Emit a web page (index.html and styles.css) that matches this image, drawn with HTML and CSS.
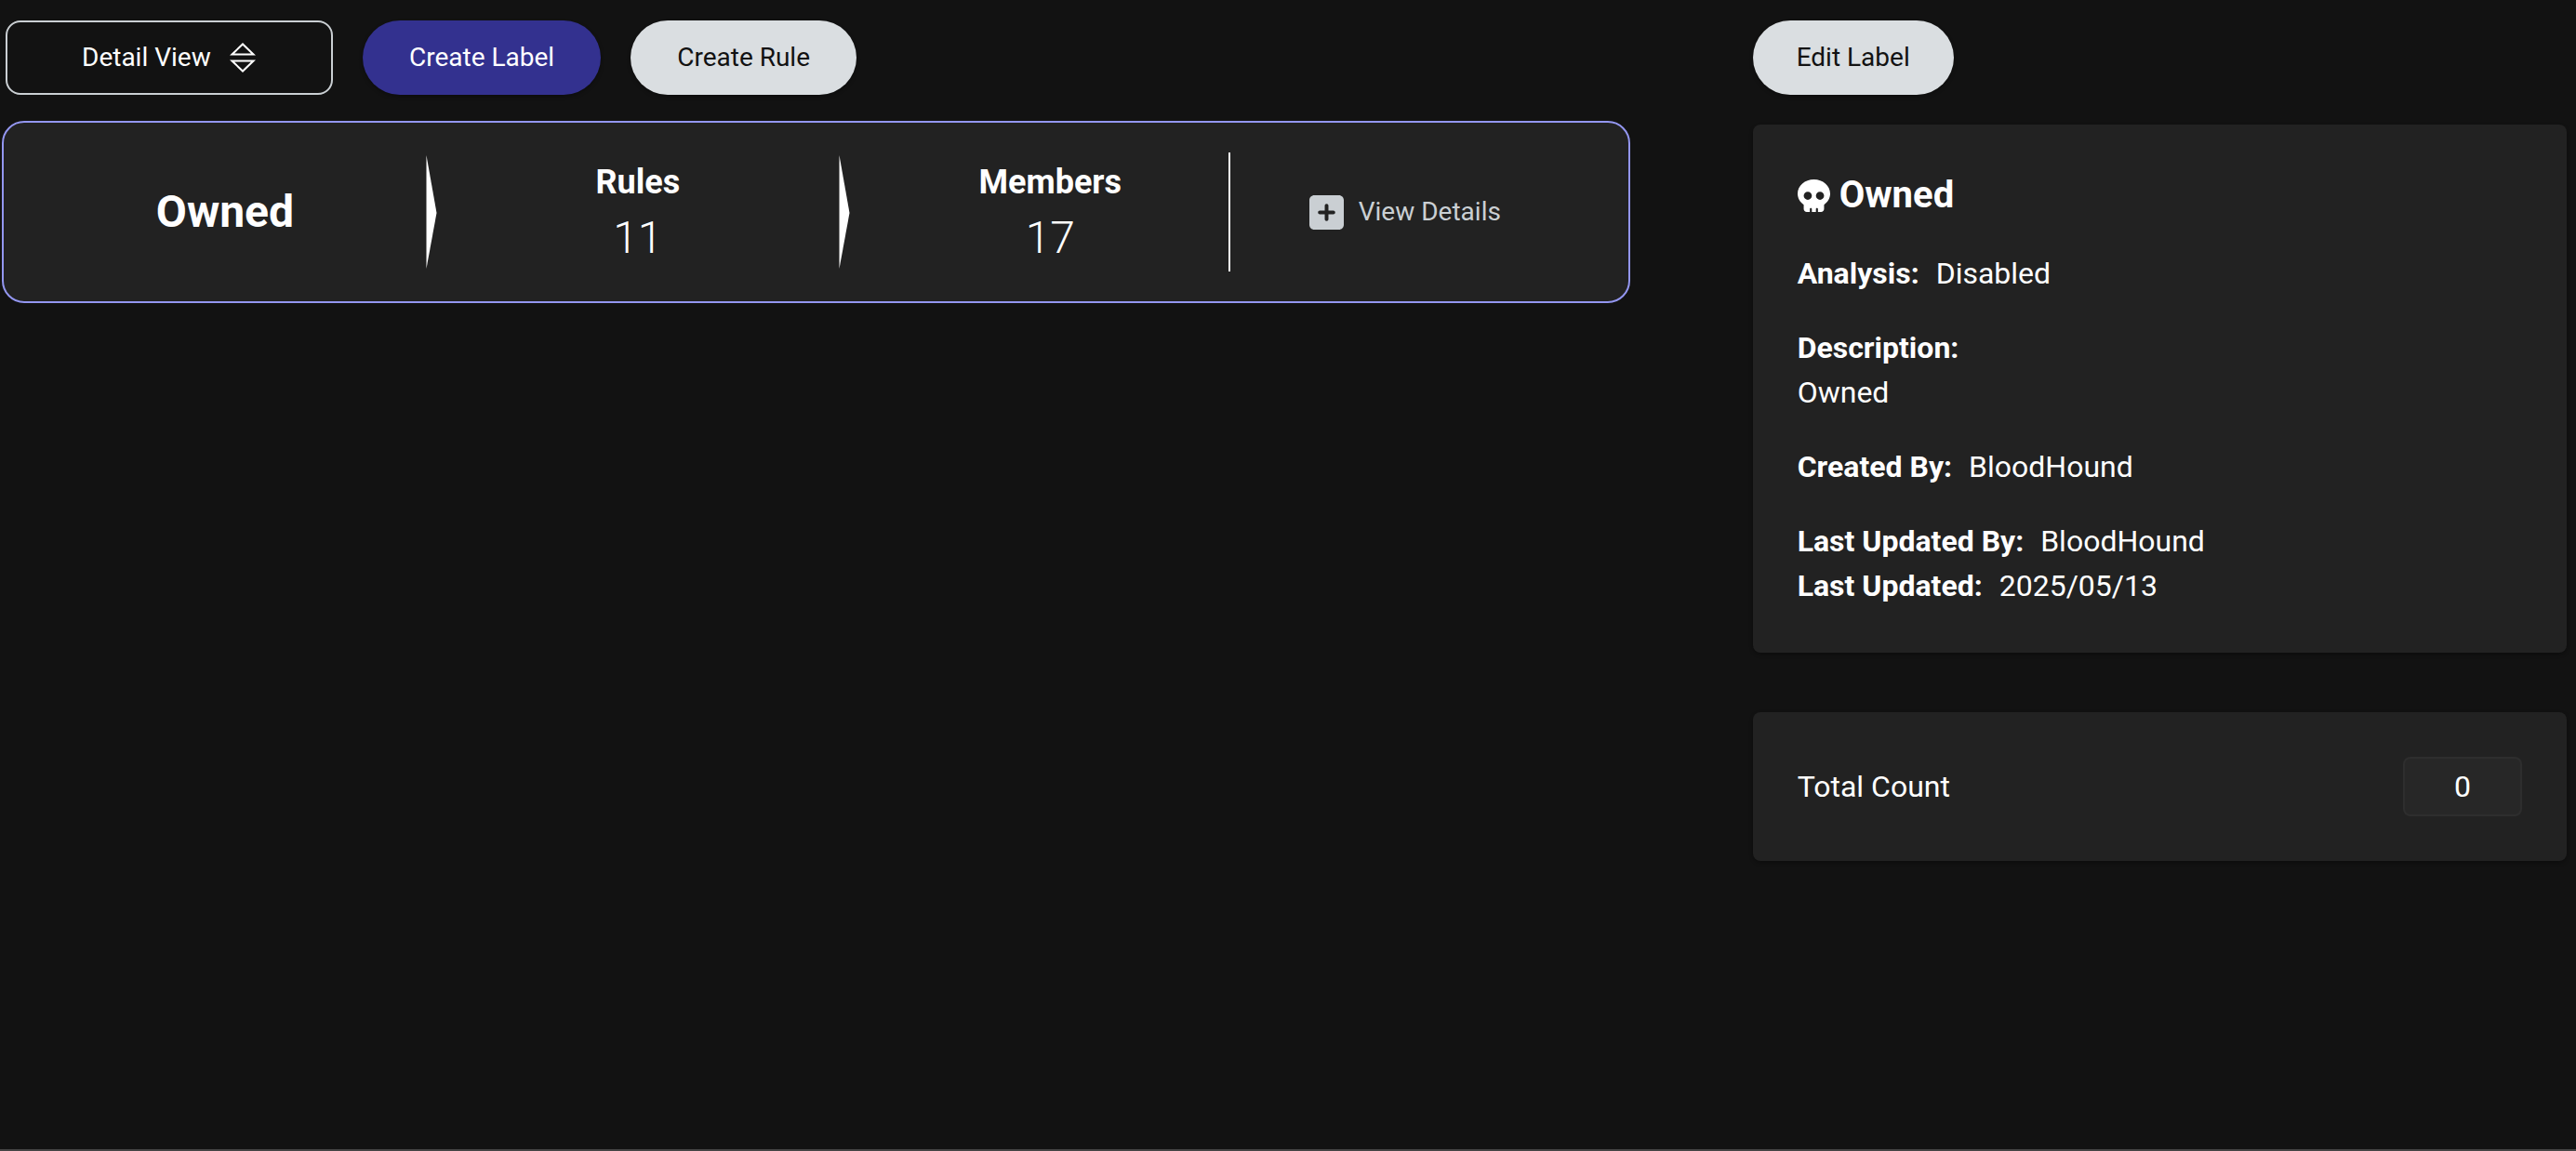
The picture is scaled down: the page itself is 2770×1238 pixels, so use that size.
FILE: index.html
```html
<!DOCTYPE html>
<html lang="en">
<head>
<meta charset="utf-8">
<meta name="viewport" content="width=device-width, initial-scale=1">
<title>Owned</title>
<link rel="stylesheet" href="styles.css">
</head>
<body>
<main class="page">
  <section class="primary">
    <div class="toolbar">
      <div class="view-select">
        <select class="view-select-input" aria-label="View">
          <option>Detail View</option>
        </select>
        <svg class="view-select-icon" viewBox="0 0 28 34" fill="none" stroke="currentColor" stroke-width="2" aria-hidden="true">
          <path d="M2.500 13.500L14 2.500L25.500 13.500Z"/>
          <path d="M2.500 20.500L14 31.500L25.500 20.500Z"/>
        </svg>
      </div>
      <button class="button button-wide button-primary" type="button">Create Label</button>
      <button class="button button-wide" type="button">Create Rule</button>
    </div>
    <article class="summary">
      <h1 class="summary-name">Owned</h1>
      <svg class="arrow" viewBox="0 0 12 122" fill="currentColor" aria-hidden="true"><path d="M0.500 0L11.500 62L0.500 122Z"/></svg>
      <div class="stat">
        <h2 class="stat-label">Rules</h2>
        <p class="stat-value">11</p>
      </div>
      <svg class="arrow" viewBox="0 0 12 122" fill="currentColor" aria-hidden="true"><path d="M0.500 0L11.500 62L0.500 122Z"/></svg>
      <div class="stat stat-last">
        <h2 class="stat-label">Members</h2>
        <p class="stat-value">17</p>
      </div>
      <div class="divider"></div>
      <button class="details-button" type="button">
        <svg class="plus-icon" viewBox="0 32 448 448" fill="currentColor" aria-hidden="true"><path d="M64 32C28.700 32 0 60.700 0 96V416c0 35.300 28.700 64 64 64H384c35.300 0 64-28.700 64-64V96c0-35.300-28.700-64-64-64H64zM200 344V280H136c-13.300 0-24-10.700-24-24s10.700-24 24-24h64V168c0-13.300 10.700-24 24-24s24 10.700 24 24v64h64c13.300 0 24 10.700 24 24s-10.700 24-24 24H248v64c0 13.300-10.700 24-24 24s-24-10.700-24-24z"/></svg>
        View Details
      </button>
    </article>
  </section>

  <aside class="sidebar">
    <div class="sidebar-toolbar">
      <button class="button" type="button">Edit Label</button>
    </div>
    <section class="panel info">
      <h2 class="info-title">
        <svg class="skull-icon" viewBox="0 0 512 512" fill="currentColor" aria-hidden="true"><path d="M416 398.900c58.500-41.100 96-104.100 96-174.900C512 100.300 397.400 0 256 0S0 100.300 0 224c0 70.700 37.500 133.800 96 174.900c0 .4 0 .7 0 1.100v64c0 26.500 21.500 48 48 48h48V464c0-8.800 7.200-16 16-16s16 7.200 16 16v48h64V464c0-8.800 7.200-16 16-16s16 7.200 16 16v48h48c26.500 0 48-21.500 48-48V400c0-.4 0-.7 0-1.100zM96 256a64 64 0 1 1 128 0A64 64 0 1 1 96 256zm256-64a64 64 0 1 1 0 128 64 64 0 1 1 0-128z"/></svg>
        Owned
      </h2>
      <dl class="field"><div class="field-row"><dt>Analysis:</dt><dd>Disabled</dd></div></dl>
      <dl class="field"><div><dt>Description:</dt><dd>Owned</dd></div></dl>
      <dl class="field"><div class="field-row"><dt>Created By:</dt><dd>BloodHound</dd></div></dl>
      <dl class="field">
        <div class="field-row"><dt>Last Updated By:</dt><dd>BloodHound</dd></div>
        <div class="field-row"><dt>Last Updated:</dt><dd>2025/05/13</dd></div>
      </dl>
    </section>
    <section class="panel count">
      <span>Total Count</span>
      <span class="count-value">0</span>
    </section>
  </aside>
</main>
</body>
</html>
```
FILE: styles.css
```css
*,
*::before,
*::after {
  box-sizing: border-box;
}

body,
h1,
h2,
p,
dl,
dd {
  margin: 0;
}

body {
  background: #121212;
  color: #fff;
  font-family: Roboto, "Liberation Sans", sans-serif;
  font-size: 32px;
  line-height: 48px;
}

button,
select {
  font: inherit;
  cursor: pointer;
}

.page {
  display: grid;
  grid-template-columns: 2fr 1fr;
  align-items: start;
  gap: 132px;
  min-height: 100vh;
  padding: 22px 10px 22px 2px;
  border-bottom: 2px solid #444;
}

.primary {
  display: grid;
  gap: 28px;
}

.toolbar {
  display: flex;
  gap: 32px;
  padding-left: 4px;
}

.view-select {
  position: relative;
  width: 352px;
}

.view-select-input {
  appearance: none;
  width: 100%;
  height: 80px;
  padding: 0 80px;
  border: 2px solid #cacfd3;
  border-radius: 16px;
  background: transparent;
  color: #fff;
  font-size: 28px;
  line-height: 40px;
}

.view-select-icon {
  position: absolute;
  top: 23px;
  right: 83px;
  width: 28px;
  height: 34px;
  pointer-events: none;
}

.button {
  height: 80px;
  padding: 0 47px;
  border: 0;
  border-radius: 40px;
  background: #dadee1;
  color: #121212;
  font-size: 28px;
  line-height: 40px;
  box-shadow: 0 2px 4px rgb(0 0 0 / 30%);
}

.button-wide {
  padding: 0 50px;
}

.button-primary {
  background: #33318f;
  color: #fff;
}

.summary {
  display: grid;
  grid-template-columns: 432fr 12px 432fr 12px 407fr 2px 428fr;
  align-items: center;
  min-height: 196px;
  padding-left: 22px;
  border: 2px solid #9396f0;
  border-radius: 24px;
  background: #222;
  text-align: center;
}

.summary-name {
  font-size: 48px;
  line-height: 64px;
}

.stat-last {
  padding-left: 24px;
}

.stat-label {
  font-size: 36px;
  line-height: 56px;
}

.stat-value {
  font-size: 48px;
  font-weight: 300;
  line-height: 64px;
}

.arrow {
  width: 12px;
  height: 122px;
}

.divider {
  height: 128px;
  background: #fff;
}

.details-button {
  display: flex;
  align-items: center;
  justify-self: start;
  gap: 16px;
  margin-left: 37px;
  padding: 16px 48px;
  border: 0;
  background: none;
  color: #cacfd3;
  font-size: 28px;
  line-height: 40px;
}

.plus-icon {
  width: 37px;
  height: 37px;
}

.sidebar {
  display: grid;
  gap: 64px;
}

.sidebar-toolbar {
  margin-bottom: -32px;
}

.panel {
  padding: 48px;
  border-radius: 8px;
  background: #222;
  box-shadow: 0 2px 4px rgb(0 0 0 / 30%);
}

.info {
  display: grid;
  gap: 32px;
}

.info-title {
  display: flex;
  align-items: center;
  gap: 10px;
  font-size: 40px;
  line-height: 56px;
}

.skull-icon {
  width: 35px;
  height: 35px;
}

.field-row {
  display: flex;
  gap: 18px;
}

.field dt {
  font-weight: 700;
}

.count {
  display: flex;
  align-items: center;
  justify-content: space-between;
}

.count-value {
  width: 128px;
  padding: 6px 0;
  border: 2px solid #2e2e2e;
  border-radius: 8px;
  background: #272727;
  text-align: center;
}
```
